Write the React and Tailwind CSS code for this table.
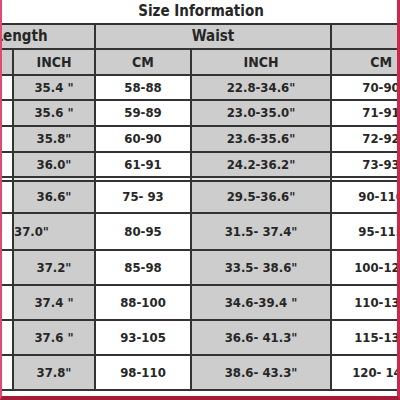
import React from 'react';

const rows = [
  { h: 'h-[25px]', inch: '35.4 "', cm: '58-88', waist: '22.8-34.6"', cm2: '70-90' },
  { h: 'h-[26px]', inch: '35.6 "', cm: '59-89', waist: '23.0-35.0"', cm2: '71-91' },
  { h: 'h-[26px]', inch: '35.8"', cm: '60-90', waist: '23.6-35.6"', cm2: '72-92' },
  { h: 'h-[25px]', inch: '36.0"', cm: '61-91', waist: '24.2-36.2"', cm2: '73-93', sep: true },
  { h: 'h-[32px]', inch: '36.6"', cm: '75- 93', waist: '29.5-36.6"', cm2: '90-110' },
  { h: 'h-[37px]', inch: '37.0"', cm: '80-95', waist: '31.5- 37.4"', cm2: '95-115', left: true },
  { h: 'h-[35px]', inch: '37.2"', cm: '85-98', waist: '33.5- 38.6"', cm2: '100-120' },
  { h: 'h-[35px]', inch: '37.4 "', cm: '88-100', waist: '34.6-39.4 "', cm2: '110-130' },
  { h: 'h-[35px]', inch: '37.6 "', cm: '93-105', waist: '36.6- 41.3"', cm2: '115-135' },
  { h: 'h-[35px]', inch: '37.8"', cm: '98-110', waist: '38.6- 43.3"', cm2: '120- 140' },
];

const cell = 'border-2 border-[#333] p-0 text-center align-middle whitespace-nowrap';

export default function App() {
  return (
    <div className="w-[400px] h-[400px] overflow-hidden bg-white border-l-2 border-r-[3px] border-b-[4px] border-l-[#de4a72] border-r-[#c8284c] border-b-[#a51c36] font-['DejaVu_Sans_Condensed','DejaVu_Sans','Liberation_Sans',sans-serif] font-bold text-[13px] text-[#262626]">
      <table className="table-fixed border-collapse w-[484px] -ml-[56px]">
        <colgroup>
          <col className="w-[66px]" />
          <col className="w-[82px]" />
          <col className="w-[96px]" />
          <col className="w-[140px]" />
          <col className="w-[100px]" />
        </colgroup>
        <tbody>
          <tr className="h-[24px]">
            <td colSpan={5} className="border-b-2 border-[#333] p-0 pl-[24px] text-center text-[15px] align-middle">
              Size Information
            </td>
          </tr>
          <tr className="h-[25px] bg-[#cdcdcd]">
            <td colSpan={2} className={`${cell} text-[15px]`}>Length</td>
            <td colSpan={2} className={`${cell} text-[15px]`}>Waist</td>
            <td className={cell}></td>
          </tr>
          <tr className="h-[26px] bg-[#cdcdcd] text-[14px]">
            <td className={cell}>CM</td>
            <td className={cell}>INCH</td>
            <td className={cell}>CM</td>
            <td className={cell}>INCH</td>
            <td className={cell}>CM</td>
          </tr>
          {rows.map((r, i) => (
            <React.Fragment key={i}>
              <tr className={r.h}>
                <td className={`${cell} bg-white`}></td>
                <td className={`${cell} bg-[#cdcdcd] ${r.left ? 'text-left' : ''}`}>{r.inch}</td>
                <td className={`${cell} bg-white`}>{r.cm}</td>
                <td className={`${cell} bg-[#cdcdcd]`}>{r.waist}</td>
                <td className={`${cell} bg-white`}>{r.cm2}</td>
              </tr>
              {r.sep && (
                <tr className="h-[4px] bg-white">
                  <td className="border-x-2 border-[#333] p-0"></td>
                  <td className="border-x-2 border-[#333] p-0 bg-[#e4e4e4]"></td>
                  <td className="border-x-2 border-[#333] p-0"></td>
                  <td className="border-x-2 border-[#333] p-0 bg-[#e4e4e4]"></td>
                  <td className="border-x-2 border-[#333] p-0"></td>
                </tr>
              )}
            </React.Fragment>
          ))}
        </tbody>
      </table>
    </div>
  );
}
